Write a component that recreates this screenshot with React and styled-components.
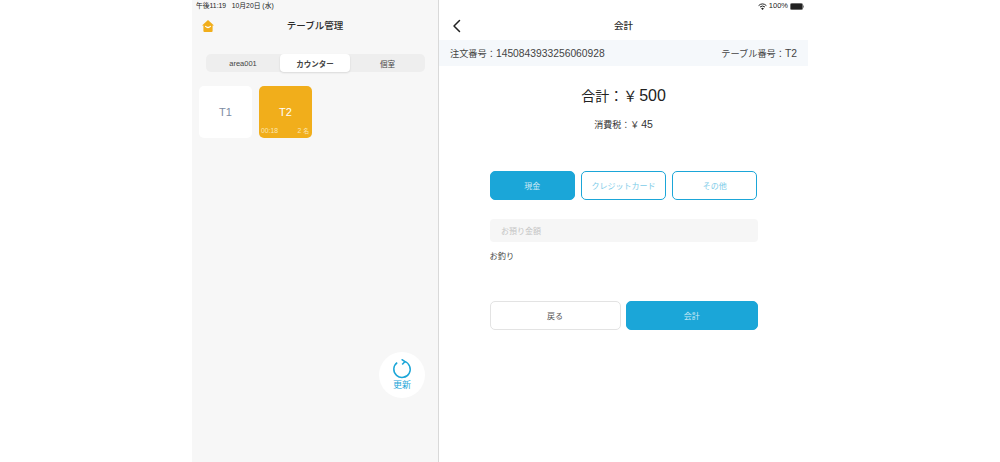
import React from 'react'
import styled, { createGlobalStyle } from 'styled-components'

const GlobalStyle = createGlobalStyle`
  html, body {
    margin: 0;
    padding: 0;
    background: #fff;
    height: 100%;
  }
  * {
    box-sizing: border-box;
  }
  body {
    font-family: "Liberation Sans", "Noto Sans CJK JP", sans-serif;
    color: #333;
    overflow: hidden;
  }
`

const Page = styled.div`
  width: 616px;
  height: 462px;
  margin: 0 auto;
  display: flex;
`

const LeftPane = styled.section`
  position: relative;
  width: 247px;
  height: 100%;
  background: #f7f7f7;
  border-right: 1px solid #d9d9d9;
`

const RightPane = styled.section`
  flex: 1;
  height: 100%;
  background: #fff;
`

const StatusBar = styled.div`
  height: 12px;
  display: flex;
  align-items: center;
  justify-content: ${(p) => (p.$end ? 'flex-end' : 'flex-start')};
  gap: 2px;
  padding: 0 4px;
  font-size: ${(p) => (p.$end ? 7.5 : 6.8)}px;
  line-height: 12px;
  color: #222;
  white-space: pre;
`

const Header = styled.header`
  position: relative;
  height: 28px;
  padding-bottom: 2px;
  display: flex;
  align-items: center;
  justify-content: center;
  font-size: 9.5px;
  font-weight: 500;
  color: #2b2b2b;
`

const HeaderIcon = styled.span`
  position: absolute;
  left: ${(p) => p.$left}px;
  top: ${(p) => p.$top}px;
  display: flex;
`

const Segments = styled.div`
  margin: 14px 13px 0 14px;
  height: 18px;
  display: grid;
  grid-template-columns: 74px 70px 1fr;
  border-radius: 5px;
  background: #eeeeee;
`

const Segment = styled.div`
  display: flex;
  align-items: center;
  justify-content: center;
  border-radius: 4px;
  font-size: 7.5px;
  font-weight: ${(p) => (p.$active ? 600 : 400)};
  color: #444;
  background: ${(p) => (p.$active ? '#fff' : 'transparent')};
  box-shadow: ${(p) => (p.$active ? '0 1px 2px rgba(0,0,0,.12)' : 'none')};
`

const Tables = styled.div`
  margin-top: 14px;
  padding-left: 7px;
  display: flex;
  gap: 7px;
`

const TableCard = styled.div`
  position: relative;
  width: 53px;
  height: 52px;
  border-radius: 5px;
  display: flex;
  align-items: center;
  justify-content: center;
  font-size: 11px;
  background: ${(p) => (p.$busy ? '#f1ae1b' : '#fff')};
  color: ${(p) => (p.$busy ? '#fff' : '#7d8ba3')};
`

const CardMeta = styled.div`
  position: absolute;
  left: 2px;
  right: 3px;
  bottom: 2px;
  display: flex;
  justify-content: space-between;
  align-items: baseline;
  font-size: 6.8px;
  line-height: 9px;
  color: #fbe6b5;
`

const Guests = styled.span`
  font-size: 5.8px;
`

const RefreshButton = styled.div`
  position: absolute;
  left: 187px;
  top: 352px;
  width: 46px;
  height: 46px;
  border-radius: 50%;
  background: #fff;
  display: flex;
  flex-direction: column;
  align-items: center;
  padding-top: 7px;
  font-size: 9px;
  line-height: 12px;
  color: #1ba6d8;
`

const OrderBar = styled.div`
  height: 26px;
  background: #f5f8fb;
  display: flex;
  align-items: center;
  justify-content: space-between;
  padding: 0 11px;
  font-size: 9.2px;
  color: #444;
`

// latin digits sit a little larger than the kanji next to them in the reference
const Num = styled.span`
  font-size: ${(p) => p.$size}px;
  line-height: 0;
  margin-left: ${(p) => p.$gap || 0}px;
`

const Body = styled.div`
  padding: 0 50.5px;
  display: flex;
  flex-direction: column;
`

const Total = styled.div`
  margin-top: 20px;
  text-align: center;
  font-size: 14px;
  line-height: 20px;
  color: #222;
`

const Tax = styled.div`
  margin-top: 12px;
  text-align: center;
  font-size: 9px;
  line-height: 14px;
  color: #333;
`

const Methods = styled.div`
  margin-top: 39px;
  display: grid;
  grid-template-columns: repeat(3, 1fr);
  gap: 5.5px;
`

const Button = styled.div`
  height: 28.5px;
  border-radius: 5px;
  display: flex;
  align-items: center;
  justify-content: center;
  font-size: 8px;
  background: ${(p) => (p.$fill ? '#1ba6d8' : '#fff')};
  color: ${(p) => (p.$fill ? '#cdeaf6' : p.$plain ? '#555' : '#7ccbe8')};
  border: ${(p) => (p.$plain ? '1px solid #e3e3e3' : '1.5px solid #1ba6d8')};
`

const AmountInput = styled.div`
  margin-top: 19.5px;
  height: 23px;
  border-radius: 4px;
  background: #f6f6f6;
  padding-left: 11.5px;
  display: flex;
  align-items: center;
  font-size: 8px;
  color: #c4c4c4;
`

const Change = styled.div`
  margin-top: 8px;
  font-size: 8.2px;
  line-height: 13px;
  color: #444;
`

const Actions = styled.div`
  margin-top: 38px;
  display: grid;
  grid-template-columns: 131px 1fr;
  gap: 5.5px;
`

const HomeIcon = () => (
  <svg width="12" height="12" viewBox="0 0 12 12">
    <path d="M6 0 L12 5.4 H10.6 V11 a1 1 0 0 1-1 1 H2.4 a1 1 0 0 1-1-1 V5.4 H0 Z" fill="#f1ae1b" />
    <path d="M3.6 6.4 Q6 8.6 8.4 6.4" stroke="#fff" strokeWidth="1.2" fill="none" strokeLinecap="round" />
  </svg>
)

const BackIcon = () => (
  <svg width="10" height="14" viewBox="0 0 10 14">
    <path d="M7.5 1.5 L2 7 L7.5 12.5" stroke="#222" strokeWidth="1.5" fill="none" strokeLinecap="round" strokeLinejoin="round" />
  </svg>
)

const RefreshIcon = () => (
  <svg width="20" height="20" viewBox="0 0 20 20">
    <path d="M12.4 2.4 A8.2 8.2 0 1 1 5.2 3.6" stroke="#1ba6d8" strokeWidth="1.5" fill="none" />
    <path d="M9.6 0.3 L13 2.6 L10.2 5.6" stroke="#1ba6d8" strokeWidth="1.5" fill="none" />
  </svg>
)

const WifiIcon = () => (
  <svg width="9" height="7" viewBox="0 0 9 7">
    <path d="M0.6 2.6 Q4.5 -0.8 8.4 2.6" stroke="#222" strokeWidth="1" fill="none" />
    <path d="M2 4 Q4.5 2 7 4" stroke="#222" strokeWidth="1" fill="none" />
    <path d="M4.5 7 L3.1 5.4 Q4.5 4.3 5.9 5.4 Z" fill="#222" />
  </svg>
)

const BatteryIcon = () => (
  <svg width="14" height="7" viewBox="0 0 14 7">
    <rect x="0.3" y="0.3" width="12.4" height="6.4" rx="1.5" fill="#222" stroke="#888" strokeWidth="0.5" />
    <rect x="13" y="2.3" width="1" height="2.4" rx="0.4" fill="#888" />
  </svg>
)

const App = () => (
  <>
    <GlobalStyle />
    <Page>
      <LeftPane>
        <StatusBar>{'午後11:19   10月20日 (水)'}</StatusBar>
        <Header>
          <HeaderIcon $left={10} $top={8}>
            <HomeIcon />
          </HeaderIcon>
          テーブル管理
        </Header>
        <Segments>
          <Segment>area001</Segment>
          <Segment $active>カウンター</Segment>
          <Segment>個室</Segment>
        </Segments>
        <Tables>
          <TableCard>T1</TableCard>
          <TableCard $busy>
            T2
            <CardMeta>
              <span>00:18</span>
              <span>
                2 <Guests>名</Guests>
              </span>
            </CardMeta>
          </TableCard>
        </Tables>
        <RefreshButton>
          <RefreshIcon />
          更新
        </RefreshButton>
      </LeftPane>
      <RightPane>
        <StatusBar $end>
          <WifiIcon />
          100%
          <BatteryIcon />
        </StatusBar>
        <Header>
          <HeaderIcon $left={13} $top={7}>
            <BackIcon />
          </HeaderIcon>
          会計
        </Header>
        <OrderBar>
          <span>
            注文番号：<Num $size={10.3}>1450843933256060928</Num>
          </span>
          <span>
            テーブル番号：<Num $size={10.3}>T2</Num>
          </span>
        </OrderBar>
        <Body>
          <Total>
            合計：￥<Num $size={16} $gap={2}>500</Num>
          </Total>
          <Tax>
            消費税：￥<Num $size={10.5} $gap={2}>45</Num>
          </Tax>
          <Methods>
            <Button $fill>現金</Button>
            <Button>クレジットカード</Button>
            <Button>その他</Button>
          </Methods>
          <AmountInput>お預り金額</AmountInput>
          <Change>お釣り</Change>
          <Actions>
            <Button $plain>戻る</Button>
            <Button $fill>会計</Button>
          </Actions>
        </Body>
      </RightPane>
    </Page>
  </>
)

export default App
